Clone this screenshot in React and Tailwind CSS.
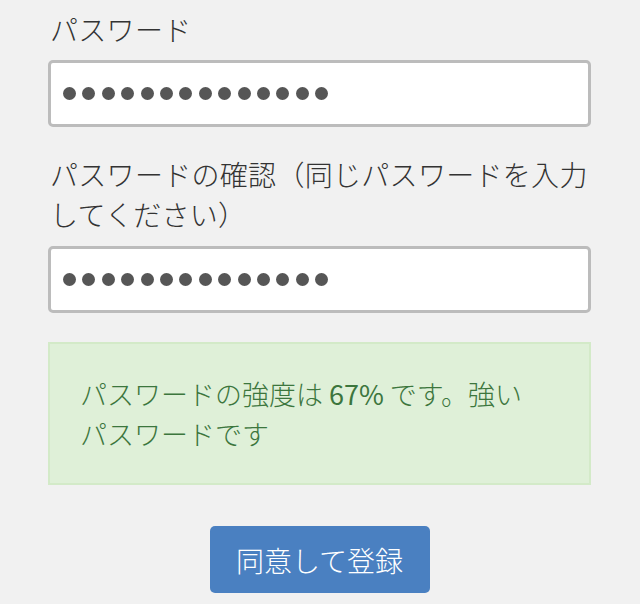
export default function App() {
  const dots = Array.from({ length: 14 });
  const font = { fontFamily: '"Noto Sans CJK JP", "Noto Sans", sans-serif' };
  const Input = () => (
    <div className="h-[67px] w-[543px] rounded-[5px] border-[3px] border-[#bcbcbc] bg-white pl-[12px] flex items-center gap-[6.4px]">
      {dots.map((_, i) => (
        <span key={i} className="block h-[13px] w-[13px] rounded-full bg-[#565656]" />
      ))}
    </div>
  );
  return (
    <div className="w-[640px] h-[604px] bg-[#f1f1f1] overflow-hidden" style={font}>
      <div className="pl-[48px] pt-[9px] flex flex-col">
        <div className="text-[28px] leading-[40px] text-[#333] pl-[2px] font-light tracking-[0.3px]">パスワード</div>
        <div className="mt-[11px]"><Input /></div>
        <div className="mt-[27px] text-[28px] leading-[40px] text-[#333] pl-[2px] font-light tracking-[0.3px]">
          パスワードの確認（同じパスワードを入力<br />してください）
        </div>
        <div className="mt-[12px]"><Input /></div>
        <div className="mt-[29px] w-[543px] h-[143px] border-2 border-[#d3eac8] bg-[#dff0d8] pl-[30px] pt-[30px] text-[27px] leading-[40px] text-[#3c763d] font-light">
          パスワードの強度は <span className="font-normal">67%</span> です。強い<br />パスワードです
        </div>
        <div className="mt-[41px] w-[543px] flex justify-center">
          <button className="h-[67px] w-[220px] rounded-[5px] bg-[#4a80c1] text-white text-[28px] leading-[40px] font-light" style={font}>
            同意して登録
          </button>
        </div>
      </div>
    </div>
  );
}
